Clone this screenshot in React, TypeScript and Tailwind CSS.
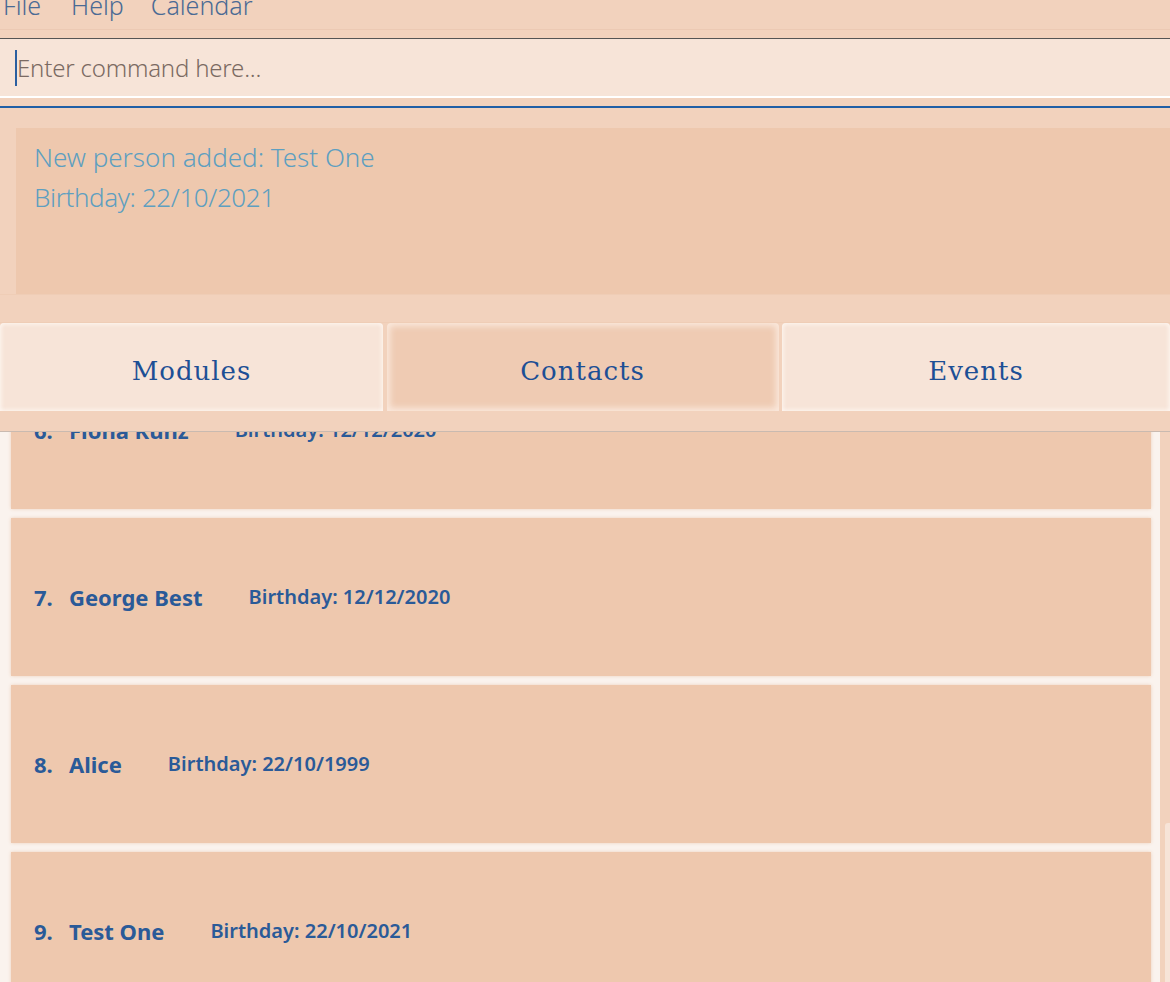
const contacts = [
  { idx: 6, name: "Fiona Kunz", birthday: "12/12/2020" },
  { idx: 7, name: "George Best", birthday: "12/12/2020" },
  { idx: 8, name: "Alice", birthday: "22/10/1999" },
  { idx: 9, name: "Test One", birthday: "22/10/2021" },
];

const tabs = [
  { label: "Modules", active: false },
  { label: "Contacts", active: true },
  { label: "Events", active: false },
];

export default function App() {
  return (
    <div className="w-[1170px] h-[982px] overflow-hidden bg-[#f2d2bd] font-['Noto_Sans',sans-serif]">
      {/* Menu bar */}
      <div className="h-[30px] overflow-hidden border-b border-[#ecc9b3]">
        <div className="flex -mt-[10px] pl-[3px] text-[25px] font-light text-[#4a6a94] leading-[30px]">
          <span className="mr-[30px]">File</span>
          <span className="mr-[27px]">Help</span>
          <span>Calendar</span>
        </div>
      </div>

      {/* Command box */}
      <div className="mt-[8px] border-t border-[#555]">
        <div className="h-[59px] bg-[#f7e4d8] flex items-center pl-[15px] border-b-2 border-white">
          <span className="w-[2px] h-[36px] bg-[#2b5fa0]" />
          <span className="text-[24px] font-light text-[#7b6a62] tracking-[-0.2px]">
            Enter command here...
          </span>
        </div>
      </div>
      <div className="mt-[8px] h-[2px] bg-[#205fa6]" />

      {/* Result display */}
      <div className="pt-[20px] pl-[16px] border-b border-[#efcdb6]">
        <div className="h-[166px] bg-[#eec8ae] pl-[18px] pt-[9px] text-[26px] font-light text-[#5e9fc0] leading-[40px]">
          <div>New person added: Test One</div>
          <div className="tracking-[-0.4px]">Birthday: 22/10/2021</div>
        </div>
      </div>
      <div className="h-[28px] border-b border-[#efcdb6]" />

      {/* Tabs */}
      <div className="grid grid-cols-[383px_392px_388px] gap-[3.5px] h-[88px]">
        {tabs.map((t) => (
          <div
            key={t.label}
            className={
              t.active
                ? "rounded-t-[4px] bg-[#efcbb3] shadow-[inset_0_0_6px_3px_rgba(255,245,238,0.7)] flex items-center justify-center pt-[8px]"
                : "rounded-t-[4px] bg-[#f7e4d8] shadow-[inset_0_0_4px_1px_rgba(255,250,245,0.9)] flex items-center justify-center pt-[8px]"
            }
          >
            <span className="font-['DejaVu_Serif',serif] text-[26px] text-[#1d4f95] tracking-[1px]">
              {t.label}
            </span>
          </div>
        ))}
      </div>
      <div className="h-[21px] border-b border-[#c9bab0]" />

      {/* Contact list */}
      <div className="flex h-[551px]">
        <div className="flex-1 overflow-hidden bg-[#faf3ee]">
          <div className="-mt-[81px] pl-[11px] pr-[9px] flex flex-col gap-[9px]">
            {contacts.map((c) => (
              <div
                key={c.idx}
                className="h-[158px] bg-[#eec8ae] flex items-center pl-[23px] text-[#2a5a98] font-bold shadow-[0_0_3px_rgba(238,200,174,0.8)]"
              >
                <span className="text-[22px] w-[35px]">{c.idx}.</span>
                <span className="text-[22px]">{c.name}</span>
                <span className="text-[20px] ml-[46px] font-semibold">Birthday: {c.birthday}</span>
              </div>
            ))}
          </div>
        </div>
        <div className="w-[10px] bg-[#f2d2bd] flex flex-col">
          <div className="h-[391px]" />
          <div className="flex-1 ml-[5px] rounded-tl-[3px] bg-[#f7e4d8]" />
        </div>
      </div>
    </div>
  );
}
